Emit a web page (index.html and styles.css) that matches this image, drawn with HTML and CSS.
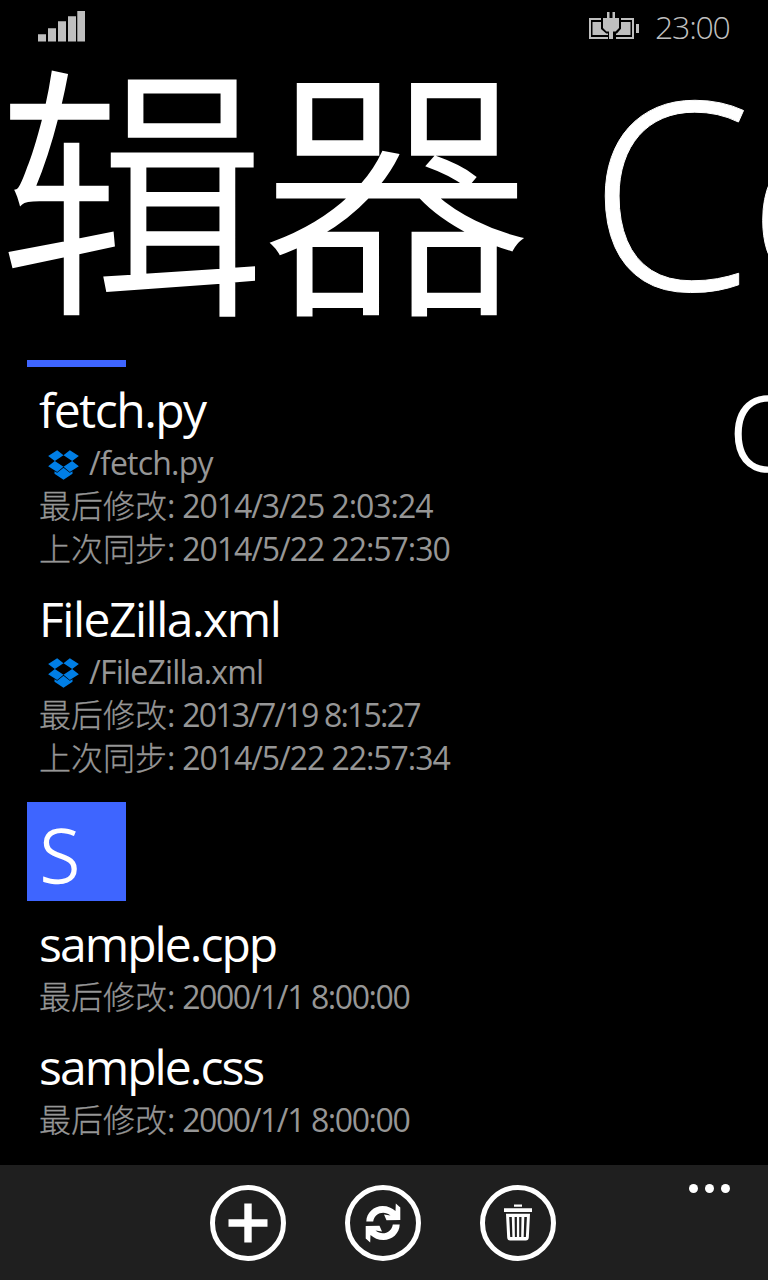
FILE: index.html
```html
<!DOCTYPE html>
<html lang="zh-CN">
<head>
<meta charset="utf-8">
<title>编辑器</title>
<link rel="stylesheet" href="styles.css">
</head>
<body>
<svg class="defs" width="0" height="0">
  <symbol id="dropbox" viewBox="0 0 92 90">
    <path d="M0 18 27 1 46 16 20 33zM92 18 65 1 46 16 72 33zM0 49 20 33 46 50 27 66zM92 49 72 33 46 50 65 66zM46 53 65 68 73 64v7L46 89 19 71v-7l8 4z"/>
  </symbol>
</svg>
<div class="phone">
  <header class="status">
    <svg class="signal" width="47" height="31" viewBox="0 0 47 31"><path d="M0 23.300h8V30.500H0zM10 17.300h8v13.200h-8zM20 10.300h8v20.200h-8zM30 5.300h8v25.200h-8zM39.300 0h8v30.500h-8z"/></svg>
    <svg class="battery" width="51" height="27" viewBox="1 0 51 27">
      <path class="frame" d="M2 7h43v19H2z"/>
      <path d="M4.500 10h38v13h-38zM48 12h3v9h-3z"/>
      <path class="halo" d="M15 6h16v10l-3 3.500h-2V27h-4v-7.500h-3L15 16z"/>
      <path d="M19 0h2.500v6h3V0H27v6h4v10l-3.500 3.500H25V27h-4v-7.500h-2.500L15 16V6h4z"/>
    </svg>
    <span class="clock">23:00</span>
  </header>
  <h1 class="title"><span class="title-cjk">辑器</span><span class="title-latin">Co</span></h1>
  <main class="panorama">
    <section class="files">
      <div class="tile tile-cut"></div>
      <article class="item">
        <h2 class="name">fetch.py</h2>
        <p class="line path"><svg class="dropbox" width="31" height="30"><use href="#dropbox"/></svg><span>/fetch.py</span></p>
        <p class="line"><span class="label">最后修改</span>: <span class="date">2014/3/25 2:03:24</span></p>
        <p class="line"><span class="label">上次同步</span>: <span class="date">2014/5/22 22:57:30</span></p>
      </article>
      <article class="item">
        <h2 class="name">FileZilla.xml</h2>
        <p class="line path"><svg class="dropbox" width="31" height="30"><use href="#dropbox"/></svg><span>/FileZilla.xml</span></p>
        <p class="line"><span class="label">最后修改</span>: <span class="date tighter">2013/7/19 8:15:27</span></p>
        <p class="line"><span class="label">上次同步</span>: <span class="date">2014/5/22 22:57:34</span></p>
      </article>
      <div class="tile"><span>S</span></div>
      <article class="item sample">
        <h2 class="name">sample.cpp</h2>
        <p class="line"><span class="label">最后修改</span>: <span class="date tight">2000/1/1 8:00:00</span></p>
      </article>
      <article class="item sample">
        <h2 class="name">sample.css</h2>
        <p class="line"><span class="label">最后修改</span>: <span class="date tight">2000/1/1 8:00:00</span></p>
      </article>
    </section>
    <section class="next">O</section>
  </main>
  <footer class="appbar">
    <div class="button"><svg width="66" height="66" viewBox="-33 -33 66 66"><path d="M-3.700-19.500h7.400v15.800h15.800v7.400H3.700v15.800h-7.400V3.700h-15.800v-7.400h15.800z"/></svg></div>
    <div class="button"><svg width="66" height="66" viewBox="-33 -33 66 66"><path id="arrow" d="M-16.700-1.500C-16.500-10.500-9-17-.5-17 5-17 9-15 12.500-12L12.800-19.500 17.300-15.500V-3L3.500-2.700 1-8.500 7.500-7.500C1-13-8.500-10-9.800-1.500z"/><use href="#arrow" transform="rotate(180)"/></svg></div>
    <div class="button"><svg width="66" height="66" viewBox="-33 -33 66 66"><path fill-rule="evenodd" d="M-4-18.500h8v2.200h-8zM-14-14.700h28v3.700h-28zM-12-9.200h24L10.800 14.500q-.2 3-3 3H-7.800q-2.800 0-3-3zM-8.800-6l1 20h2.200l-.6-20zM-3.400-6l.3 20h2V-6zM1.200-6v20h2l.3-20zM6.300-6l-.6 20h2.200l1-20z"/></svg></div>
    <div class="more"><i></i><i></i><i></i></div>
  </footer>
</div>
</body>
</html>
```
FILE: styles.css
```css
body { margin: 0; background: #000; color: #fff; font-family: "Open Sans", "Noto Sans CJK SC", sans-serif; }
.defs { display: block; }
.phone { width: 768px; height: 1280px; overflow: hidden; display: flex; flex-direction: column; }
.status { flex: none; height: 54px; display: flex; box-sizing: border-box; padding: 0 38px; align-items: flex-start; color: #bfbfbf; fill: #bfbfbf; }
.signal { margin-top: 11px; }
.battery { margin: 12px 15px 0 auto; }
.frame { fill: none; stroke: #bfbfbf; stroke-width: 2; }
.halo { fill: #000; stroke: #000; stroke-width: 4; }
.clock { font-size: 32px; line-height: 44px; margin-top: 5px; font-weight: 300; letter-spacing: -1.2px; width: 75px; white-space: nowrap; }
.title { flex: none; margin: 0; height: 306px; display: flex; font-weight: 300; white-space: nowrap; }
.title-cjk { font: 300 267px/250px "Noto Sans CJK SC", sans-serif; width: 591px; flex: none; letter-spacing: -2px; margin-left: -2px; -webkit-text-stroke: 3.5px #fff; }
.title-latin { font-size: 262px; line-height: 270px; letter-spacing: -4px; -webkit-text-stroke: 1px #fff; }
.panorama { flex: none; height: 805px; display: flex; overflow: hidden; }
.files { width: 702px; flex: none; padding-left: 27px; display: flex; flex-direction: column; }
.tile { flex: none; width: 99px; height: 99px; background: #3e65ff; margin: 7px 0 11px; }
.tile-cut { height: 6.500px; margin: 0 0 11.500px; }
.tile span { display: block; padding-left: 13px; font-weight: 300; font-size: 73px; line-height: 106px; -webkit-text-stroke: 1.5px #fff; }
.item { padding-left: 12px; margin-bottom: 16.500px; }
.name { margin: 0; font: 400 48px/64px "Open Sans", sans-serif; letter-spacing: -1.5px; }
.sample .name { letter-spacing: -1.95px; }
.line { margin: 0; font: 400 32px/43px "Open Sans", "Noto Sans CJK SC", sans-serif; color: #969696; letter-spacing: -0.8px; white-space: pre; }
.name + .line { margin-top: -1px; }
.label { font-weight: 300; letter-spacing: 0; -webkit-text-stroke: 0.3px #969696; }
.date { letter-spacing: -1.05px; }
.date.tight { letter-spacing: -1.42px; }
.date.tighter { letter-spacing: -1.8px; }
.path { display: flex; align-items: center; padding-left: 9px; gap: 10px; }
.dropbox { fill: #007ee5; margin-top: 4px; }
.next { font-size: 104px; font-weight: 300; line-height: 142px; -webkit-text-stroke: 1.5px #fff; }
.appbar { flex: none; position: relative; height: 115px; background: #1f1f1f; display: flex; justify-content: center; gap: 59px; padding: 19.500px 3px 0 0; box-sizing: border-box; }
.button { width: 66px; height: 66px; border: 5px solid #fff; border-radius: 50%; fill: #fff; }
.button svg { display: block; }
.more { position: absolute; right: 38px; top: 19px; display: flex; gap: 7px; }
.more i { width: 9px; height: 9px; border-radius: 50%; background: #fff; }
```
